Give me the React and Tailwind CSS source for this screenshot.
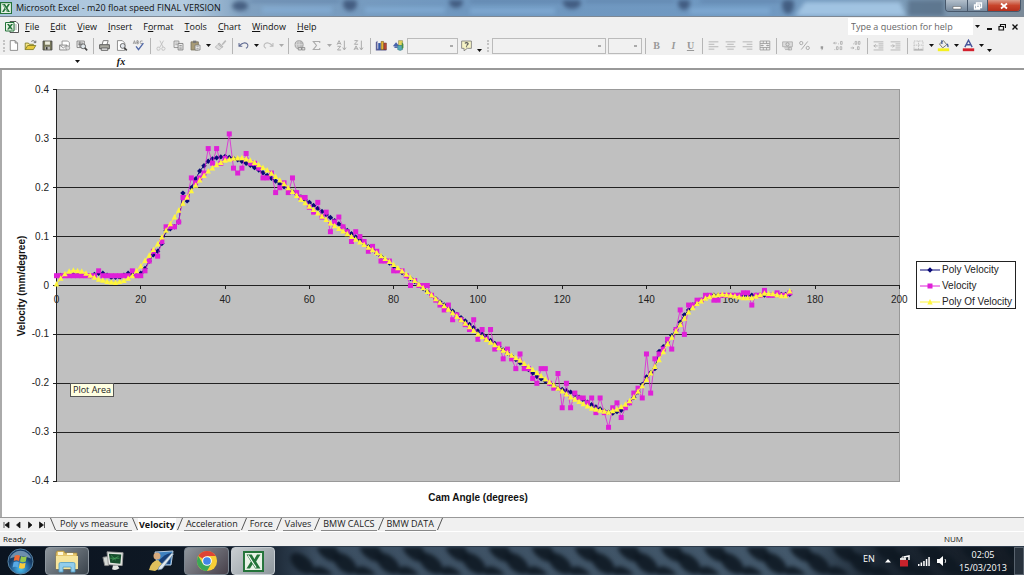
import React from "react";

/* ---------- chart data ---------- */

const velocity = [
  0.02, 0.02, 0.02, 0.02, 0.02, 0.02, 0.02, 0.02, 0.02, 0.02, 0.03, 0.02, 0.02, 0.02, 0.02, 0.02, 0.02, 0.02, 0.03, 0.02,
  0.02, 0.03, 0.05, 0.07, 0.06, 0.09, 0.12, 0.12, 0.12, 0.13, 0.18, 0.18, 0.22, 0.21, 0.22, 0.23, 0.28, 0.25, 0.28, 0.25,
  0.26, 0.31, 0.24, 0.23, 0.24, 0.27, 0.25, 0.25, 0.24, 0.22, 0.22, 0.23, 0.19, 0.2, 0.21, 0.19, 0.22, 0.19, 0.18, 0.18,
  0.16, 0.15, 0.17, 0.14, 0.15, 0.11, 0.13, 0.14, 0.12, 0.11, 0.09, 0.11, 0.1, 0.09, 0.07, 0.08, 0.07, 0.05, 0.05, 0.05,
  0.03, 0.03, 0.03, 0.02, 0, 0.01, 0, 0, 0, -0.02, -0.03, -0.04, -0.05, -0.04, -0.07, -0.06, -0.07, -0.08, -0.09, -0.07,
  -0.11, -0.09, -0.11, -0.09, -0.13, -0.12, -0.15, -0.13, -0.15, -0.17, -0.14, -0.17, -0.17, -0.19, -0.2, -0.17, -0.17, -0.2, -0.21, -0.18,
  -0.25, -0.2, -0.25, -0.22, -0.23, -0.23, -0.24, -0.23, -0.26, -0.23, -0.26, -0.29, -0.25, -0.24, -0.27, -0.25, -0.24, -0.22, -0.21, -0.23,
  -0.14, -0.22, -0.15, -0.14, -0.13, -0.11, -0.13, -0.09, -0.05, -0.1, -0.04, -0.04, -0.03, -0.03, -0.02, -0.02, -0.03, -0.03, -0.02, -0.02,
  -0.02, -0.02, -0.02, -0.015, -0.015, -0.04, -0.02, -0.02, -0.01, -0.02, -0.02, -0.015, -0.02, -0.02, -0.015,
];

const polyOfVelocityKnots = [
  [0, 0.003], [1, 0.015], [2, 0.024], [3, 0.029], [4, 0.031], [6, 0.029], [8, 0.021], [10, 0.013], [12, 0.008], [14, 0.006],
  [16, 0.01], [18, 0.02], [20, 0.04], [22, 0.062], [24, 0.085], [26, 0.113], [28, 0.14], [30, 0.168], [32, 0.194], [34, 0.216],
  [36, 0.234], [38, 0.247], [40, 0.256], [42, 0.26], [44, 0.261], [46, 0.256], [48, 0.247], [50, 0.236], [52, 0.223], [54, 0.208],
  [56, 0.192], [58, 0.176], [60, 0.162], [65, 0.128], [70, 0.1], [75, 0.073], [80, 0.043], [85, 0.01], [90, -0.027], [95, -0.063],
  [100, -0.099], [105, -0.127], [110, -0.153], [113, -0.172], [119, -0.21], [122, -0.228], [127, -0.251], [131, -0.259],
  [133, -0.253], [135, -0.243], [137, -0.228], [139, -0.205], [141, -0.179], [143, -0.152], [145, -0.119], [147, -0.093],
  [149, -0.067], [150, -0.054], [152, -0.037], [154, -0.026], [156, -0.02], [158, -0.018], [160, -0.02], [163, -0.025],
  [165, -0.025], [168, -0.016], [170, -0.017], [172, -0.021], [173, -0.021], [174, -0.011],
];

const polyVelocityKnots = [
  [0, 0.02], [4, 0.022], [8, 0.02], [10, 0.025], [11, 0.025], [13, 0.017], [15, 0.017], [17, 0.025], [19, 0.021], [20, 0.025],
  [21, 0.035], [22, 0.05], [23, 0.063], [24, 0.07], [25, 0.086], [26, 0.112], [28, 0.12], [29, 0.13], [30, 0.189], [31, 0.173],
  [32, 0.2], [33, 0.218], [34, 0.234], [35, 0.245], [36, 0.254], [37, 0.259], [39, 0.263], [40, 0.264], [42, 0.26], [44, 0.254],
  [46, 0.246], [48, 0.236], [50, 0.225], [54, 0.202], [56, 0.192], [60, 0.17], [65, 0.139], [70, 0.106], [75, 0.073], [80, 0.039],
  [85, 0.008], [90, -0.027], [95, -0.059], [100, -0.093], [105, -0.125], [110, -0.158], [114, -0.186], [119, -0.21], [122, -0.218],
  [127, -0.244], [130, -0.257], [132, -0.261], [134, -0.255], [136, -0.24], [138, -0.218], [140, -0.187], [142, -0.17],
  [143, -0.135], [145, -0.115], [147, -0.09], [149, -0.06], [151, -0.04], [154, -0.025], [156, -0.02], [165, -0.02], [174, -0.018],
];

function interpolate(knots) {
  const values = [];
  for (let i = 0; i < knots.length - 1; i++) {
    const [x0, y0] = knots[i];
    const [x1, y1] = knots[i + 1];
    for (let x = x0; x < x1; x++) values.push(y0 + ((y1 - y0) * (x - x0)) / (x1 - x0));
  }
  values.push(knots[knots.length - 1][1]);
  return values;
}

const polyVelocity = interpolate(polyVelocityKnots);
const polyOfVelocity = interpolate(polyOfVelocityKnots);

const px = (deg) => 56.5 + deg * 4.214;
const py = (v) => 215.5 - v * 489;
const line = (values) => values.map((v, i) => `${px(i).toFixed(1)},${py(v).toFixed(1)}`).join(" ");

const Diamond = ({ x, y }) => <path d={`M${x} ${y - 2.7}l2.700 2.700l-2.700 2.700l-2.700-2.700z`} fill="#0a0a78" />;
const Square = ({ x, y }) => <rect x={x - 2.5} y={y - 2.5} width="5" height="5" fill="#df20d8" />;
const Triangle = ({ x, y }) => <path d={`M${x} ${y - 3}l2.700 5.500h-5.400z`} fill="#fff63c" />;

function VelocityChart() {
  const levels = [0.4, 0.3, 0.2, 0.1, 0, -0.1, -0.2, -0.3, -0.4];
  const degrees = [0, 20, 40, 60, 80, 100, 120, 140, 160, 180, 200];
  const series = [
    ["Poly Velocity", "#0a0a78", Diamond, 200],
    ["Velocity", "#df20d8", Square, 216],
    ["Poly Of Velocity", "#fff63c", Triangle, 232],
  ];
  return (
    <svg viewBox="0 0 1024 447" className="block h-full w-full font-['Liberation_Sans',sans-serif] text-[10px]" role="img" aria-label="Velocity by cam angle">
      <rect x="56.5" y="19.5" width="843" height="392" fill="#c0c0c0" stroke="#999" />
      {levels.slice(1, -1).map((v) => (
        <path key={v} d={`M56 ${Math.round(py(v) - 0.5) + 0.5}H899`} stroke="#222" />
      ))}
      <path d="M56.5 19V412" stroke="#222" />
      {levels.map((v) => (
        <g key={v}>
          <path d={`M53 ${Math.round(py(v) - 0.5) + 0.5}H57`} stroke="#222" />
          <text x="49" y={Math.round(py(v)) + 3} textAnchor="end" fill="#222">{v}</text>
        </g>
      ))}
      {degrees.map((d) => (
        <g key={d}>
          <path d={`M${Math.round(px(d) - 0.5) + 0.5} 215V219`} stroke="#222" />
          <text x={px(d)} y="233" textAnchor="middle" fill="#222">{d}</text>
        </g>
      ))}
      <polyline points={line(polyVelocity)} fill="none" stroke="#0a0a78" />
      {polyVelocity.map((v, i) => <Diamond key={i} x={px(i)} y={py(v)} />)}
      <polyline points={line(velocity)} fill="none" stroke="#df20d8" strokeWidth="0.8" />
      {velocity.map((v, i) => <Square key={i} x={px(i)} y={py(v)} />)}
      <polyline points={line(polyOfVelocity)} fill="none" stroke="#fff63c" />
      {polyOfVelocity.map((v, i) => <Triangle key={i} x={px(i)} y={py(v)} />)}
      <text x="478" y="431" textAnchor="middle" fontWeight="bold" fill="#111">Cam Angle (degrees)</text>
      <text transform="translate(25 216) rotate(-90)" textAnchor="middle" fontWeight="bold" fill="#111">Velocity (mm/degree)</text>
      <rect x="916.5" y="191.5" width="99" height="47" fill="#fff" stroke="#222" />
      {series.map(([name, color, Marker, y]) => (
        <g key={name}>
          <path d={`M920 ${y}H940`} stroke={color} />
          <Marker x={930} y={y} />
          <text x="942" y={y + 3} fill="#222">{name}</text>
        </g>
      ))}
    </svg>
  );
}

/* ---------- small parts ---------- */

const icons = {
  new: <path d="M4 2h6l3 3v9H4zM10 2v3h3" fill="#fff" stroke="#777" />,
  open: <g><path d="M1.500 13V5h4l1 1.500h5V8" fill="#f7e58a" stroke="#77751f" /><path d="M1.500 13l3-5h10l-3 5z" fill="#e8c93c" stroke="#77751f" /><path d="M9 3c2-1.500 4-1 5 1M14.500 2v2.500H12" fill="none" stroke="#555" /></g>,
  save: <g><path d="M2.500 2.500h11v11h-11z" fill="#77775a" stroke="#444" /><path d="M5 3h6v4H5z" fill="#ececdf" /><path d="M5 9.500h6V13H5z" fill="#bbb" /><path d="M6 10h2v3H6z" fill="#333" /></g>,
  permission: <g><path d="M5 2.500h7l2 2V9H5z" fill="#fff" stroke="#888" /><path d="M2 7.500h9v6H2z" fill="#f4f4f4" stroke="#777" /><path d="M2 7.500l4.500 3.500L11 7.500" fill="none" stroke="#888" /><circle cx="12" cy="11" r="2.500" fill="#ddd" stroke="#999" /></g>,
  search: <g><path d="M2.500 2.500h9v8h-9z" fill="#eee" stroke="#777" /><path d="M4 5h6M4 7h6M6 3v7" stroke="#666" /><circle cx="10" cy="9" r="3" fill="#dfe6ea" stroke="#555" /><path d="M12 11l3 3" stroke="#444" strokeWidth="2" /></g>,
  print: <g><path d="M5 7l1.500-5h6L11 7" fill="#fff" stroke="#666" /><path d="M2 7h12v5H2z" fill="#a8a8a0" stroke="#444" /><path d="M4 11h8v3H4z" fill="#ddd" stroke="#555" /></g>,
  preview: <g><path d="M3 2h6l3 3v9H3z" fill="#fff" stroke="#777" /><circle cx="9.500" cy="8.500" r="3" fill="#e3e7ec" stroke="#555" /><path d="M11.500 11l3 3" stroke="#444" strokeWidth="2" /></g>,
  spell: <g><path d="M1.500 6l1.500-4l1.500 4M2 5h2M6 2v4h1.500q1.500-1 0-2H6h1.500q1-1.500 0-2zM13 2.500q-3-1-3 1.500t3 1.500" fill="none" stroke="#888" strokeWidth=".9" /><path d="M5 9l3 4l6-8" fill="none" stroke="#5068a8" strokeWidth="1.700" /></g>,
  cut: <path d="M6 2l4 8M10.500 2L6 10M5 10a2 2 0 100 3.800a2 2 0 000-3.800M11 10a2 2 0 100 3.800a2 2 0 000-3.800" fill="none" stroke="#bbb" />,
  copy: <g><path d="M2.500 2.500h6v8h-6z" fill="#eee" stroke="#888" /><path d="M4 5h3M4 7h3" stroke="#999" /><path d="M7.500 5.500h6v8h-6z" fill="#eee" stroke="#777" /><path d="M9 8h3M9 10h3M9 12h3" stroke="#888" /></g>,
  paste: <g><path d="M2.500 3.500h9v10h-9z" fill="#a89b76" stroke="#77705b" /><path d="M5 2h4v3H5z" fill="#777" /><path d="M7.500 7.500h6v6h-6z" fill="#fff" stroke="#777" /><path d="M9 9.500h3M9 11.500h3" stroke="#888" /></g>,
  painter: <g><path d="M14.500 2L10 7" stroke="#bbb" strokeWidth="2" /><path d="M6.500 5l4.500 4.500l-1.500 1l-4.500-4.500z" fill="#ccc" stroke="#aaa" /><path d="M5 6.500L1.500 10l5 3.500l3-3z" fill="#ddd" stroke="#b5b5b5" /></g>,
  undo: <path d="M2.500 5v4h4M3 8.500c3-4 8-5 10-2c1 2 0 4-2 5" fill="none" stroke="#5d6890" strokeWidth="1.300" />,
  redo: <path d="M13.500 5v4h-4M13 8.500c-3-4-8-5-10-2c-1 2 0 4 2 5" fill="none" stroke="#bbb" strokeWidth="1.300" />,
  link: <g><circle cx="7.500" cy="7" r="5" fill="#bbb" stroke="#999" /><path d="M3 7h9M7.500 2v10M5 3q-2 4 0 8" fill="none" stroke="#ddd" /><path d="M6.500 10.500h4v3h-4zM11 10.500h3.500v3H11z" fill="#ddd" stroke="#888" /></g>,
  sum: <path d="M12 5V3H4l4 5l-4 5h8v-2" fill="none" stroke="#aaa" strokeWidth="1.300" />,
  az: <path d="M2.500 7L5 2l2.500 5M3.500 5.500h3M3 9h4l-4 4.500h4.500M11.500 2v11M9.500 10.500l2 3l2-3" fill="none" stroke="#aaa" strokeWidth="1.200" />,
  za: <path d="M3 2h4L3 6.500h4.500M2.500 13.500L5 8.500l2.500 5M3.500 12h3M11.500 2v11M9.500 10.500l2 3l2-3" fill="none" stroke="#aaa" strokeWidth="1.200" />,
  chart: <g><path d="M1 4l2-2v10h11v2H1z" fill="#5b5f96" /><path d="M4 5h3v8H4z" fill="#3456a7" /><path d="M7.500 3h3v10h-3z" fill="#e6b32e" stroke="#77531a" strokeWidth=".7" /><path d="M11 5h3v8h-3z" fill="#c24835" stroke="#6e3024" strokeWidth=".7" /></g>,
  drawing: <g><path d="M8 2h5v6H8z" fill="#e5d65c" stroke="#8b8551" strokeWidth=".7" /><path d="M1 9l4-5l4 5z" fill="#4962aa" /><path d="M3 9h4v2H3z" fill="#4962aa" /><path d="M7 8h6v5q-3 2-6 0z" fill="#55a9b5" stroke="#347783" strokeWidth=".7" /><path d="M12 4l2 2v5l-2 1z" fill="#478d43" /></g>,
  help: <g><path d="M2 2.500h12v9H9l-4 3v-3H2z" fill="#f6f4c6" stroke="#777" /><path d="M6 5.500q2-2 4 0q0 1.500-2 2.500M8 9v1.200" fill="none" stroke="#555" strokeWidth="1.400" /></g>,
  left: <path d="M2 3.500h12M2 6.500h7M2 9.500h12M2 12.500h7" stroke="#aaa" />,
  center: <path d="M2 3.500h12M4 6.500h8M2 9.500h12M4 12.500h8" stroke="#aaa" />,
  right: <path d="M2 3.500h12M7 6.500h7M2 9.500h12M7 12.500h7" stroke="#aaa" />,
  merge: <path d="M2.500 2.500h12v11h-12zM2.500 5.500h12M2.500 10.500h12M6.500 2.500v3M10.500 2.500v3M6.500 10.500v3M10.500 10.500v3M3 8h4M10 8h4M5 7v2M12 7v2" fill="none" stroke="#999" />,
  currency: <g><path d="M2 3.500h12v6H2z" fill="#ddd" stroke="#aaa" /><circle cx="8" cy="6.500" r="2" fill="none" stroke="#999" /><path d="M4 11h7M5 13h6M9 10.500h4v3H9z" stroke="#aaa" fill="#ddd" /></g>,
  percent: <path d="M4 3a2 2 0 100 4a2 2 0 000-4M12 3L4 13M12 9a2 2 0 100 4a2 2 0 000-4" fill="none" stroke="#aaa" strokeWidth="1.200" />,
  comma: <path d="M7 9h3v2q0 2-2.500 3q1-1 1-2H7z" fill="#999" />,
  increase: <path d="M2 5h4M3.500 3.500L2 5l1.500 1.500M7.500 6h1M10.500 3h2v3.500h-2zM3 13h1M5.500 9.500h2V13h-2zM10 9.500h2V13h-2z" fill="none" stroke="#aaa" />,
  decrease: <path d="M5 6h1M7.500 3h2v3.500h-2zM11.500 3h2v3.500h-2zM2 11h4M4.500 9.500L6 11l-1.500 1.500M8 13h1M10.500 9.500h2V13h-2z" fill="none" stroke="#aaa" />,
  outdent: <path d="M2 3.500h12M8 6h6M8 8.500h6M8 11h6M2 13.500h12M2 8.500h5M4.500 6.500l-2 2l2 2" fill="none" stroke="#aaa" />,
  indent: <path d="M2 3.500h12M8 6h6M8 8.500h6M8 11h6M2 13.500h12M2 8.500h5M4.500 6.500l2 2l-2 2" fill="none" stroke="#aaa" />,
  border: <g fill="none" stroke="#aaa"><path d="M2.500 2.500h11v10h-11zM8 3v9M3 7.500h10" strokeDasharray="1 1" /><path d="M2 13.500h12" stroke="#888" /></g>,
  fill: <g><path d="M3 6l5-4l4 5l-5 4z" fill="#eee" stroke="#665" /><path d="M6 6V1.500M12 6q2 1 1.500 4" fill="none" stroke="#3d5590" strokeWidth="1.500" /><path d="M1 11.500h14V15H1z" fill="#f5f020" /></g>,
  color: <g><path d="M3.500 10L8 1.500L12.500 10M5.500 7h5" fill="none" stroke="#46549a" strokeWidth="1.700" /><path d="M1 11.500h14V15H1z" fill="#d3202d" /></g>,
};

function Tool({ name, label }) {
  return (
    <button type="button" aria-label={label || name} className="flex h-5 w-[17px] shrink-0 items-center justify-center">
      <svg viewBox="0 0 16 16" className="size-[13px]">{icons[name]}</svg>
    </button>
  );
}

function Letter({ children, className = "" }) {
  return (
    <button type="button" className={`h-5 w-[17px] shrink-0 font-['Liberation_Serif',serif] text-[10px] leading-5 font-bold text-[#999] ${className}`}>
      {children}
    </button>
  );
}

const Sep = () => <span className="mr-0.5 ml-[3px] h-4 w-0 shrink-0 border-l border-[#b5b5b5]" />;

function Drop({ dim, low, label = "More" }) {
  return (
    <button type="button" aria-label={label} className={low ? "flex h-5 w-2 shrink-0 items-end justify-center pb-1" : "flex h-5 w-2 shrink-0 items-center justify-center"}>
      <svg viewBox="0 0 5 3" className="h-[3px] w-[5px]"><path d="M0 0h5L2.500 3z" fill={dim ? "#aaa" : "#111"} /></svg>
    </button>
  );
}

function Combo({ className, label }) {
  return (
    <select aria-label={label} disabled className={`h-4 shrink-0 appearance-none border border-[#bbb] bg-[#f1f1f1] bg-[linear-gradient(#aaa,#aaa)] bg-[length:3px_2px] bg-[position:right_4px_center] bg-no-repeat ${className}`}>
      <option></option>
    </select>
  );
}

const Grip = () => <span className="h-3 w-0 shrink-0 border-l-2 border-dotted border-[#c4c4c4]" />;

function ExcelIcon({ className }) {
  return (
    <svg viewBox="0 0 24 24" className={className} aria-hidden="true">
      <path d="M1 1h22v22H1z" fill="#e9f3e7" stroke="#24743a" strokeWidth="2.500" />
      <path d="M4 4h6l3 5l3-5h4l-5 8l5 8h-6l-3-5l-3 5H4l5-8z" fill="#24743a" />
      <path d="M6 5l9 14" stroke="#fff" strokeWidth="1.200" />
    </svg>
  );
}

function WorkbookIcon({ className }) {
  return (
    <svg viewBox="0 0 28 24" className={className} aria-hidden="true">
      <path d="M10 1h12l5 5v17H10z" fill="#fff" stroke="#444" strokeWidth="1.800" />
      <path d="M18 8h6M18 12h6M18 16h6" stroke="#888" strokeWidth="1.500" />
      <path d="M1 3h17v17H1z" fill="#e9f3e7" stroke="#24743a" strokeWidth="2" />
      <path d="M4 6h4l2 3l2-3h4l-4 5.500l4 5.500h-4l-2-3l-2 3H4l4-5.500z" fill="#24743a" />
    </svg>
  );
}

const menus = [
  ["", "F", "ile"], ["", "E", "dit"], ["", "V", "iew"], ["", "I", "nsert"], ["F", "o", "rmat"],
  ["", "T", "ools"], ["", "C", "hart"], ["", "W", "indow"], ["", "H", "elp"],
];

const tabs = ["Poly vs measure", "Velocity", "Acceleration", "Force", "Valves", "BMW CALCS", "BMW DATA"];

/* ---------- window sections ---------- */

function TitleBar() {
  return (
    <header className="relative flex h-[17px] items-start overflow-hidden border-b border-[#7d8894] bg-[linear-gradient(90deg,#a9c4dc_0%,#b4cce0_18%,#7fa0c0_24%,#6f97bf_45%,#7099c2_75%,#7b9ab6_89%,#7b8a98_100%)]">
      <svg viewBox="0 0 1024 16" preserveAspectRatio="none" className="absolute inset-0 h-full w-full blur-[2px]" aria-hidden="true">
        <path d="M250 0h90M470 0h95M585 0h90M700 0h80" stroke="#4c6a92" strokeWidth="4" opacity=".6" />
        <path d="M262 10h70M365 10h80M470 11h85M690 11h80" stroke="#88b2dc" strokeWidth="6" opacity=".6" />
        <path d="M795 16l10-14h95l6 14z" fill="#a5c8e6" opacity=".9" />
        <path d="M908 0h36v16h-36z" fill="#536a82" opacity=".7" />
        <g fill="#33496c" opacity=".75">
          <ellipse cx="240" cy="6" rx="8" ry="5" /><ellipse cx="350" cy="4" rx="7" ry="7" /><ellipse cx="456" cy="2" rx="7" ry="6" />
          <ellipse cx="572" cy="3" rx="9" ry="6" /><ellipse cx="684" cy="3" rx="6" ry="7" /><ellipse cx="788" cy="5" rx="6" ry="9" />
        </g>
      </svg>
      <div className="relative flex h-4 flex-1 items-center gap-1">
        <ExcelIcon className="size-3" />
        <h1 className="text-[9px] leading-4 text-[#111]">Microsoft Excel - m20 float speed FINAL VERSION</h1>
      </div>
      <div className="relative mr-[3px] flex h-3 overflow-hidden rounded-b border border-t-0 border-[#48586b] text-white">
        <button type="button" aria-label="Minimise" className="flex w-[22px] items-center justify-center border-r border-[#48586b] bg-[linear-gradient(#b3bfcb,#75889c)]">
          <svg viewBox="0 0 10 8" className="h-2 w-2.5"><path d="M1 4.500h8v2.500H1z" fill="#fff" stroke="#555" strokeWidth=".5" /></svg>
        </button>
        <button type="button" aria-label="Restore" className="flex w-5 items-center justify-center border-r border-[#48586b] bg-[linear-gradient(#b3bfcb,#75889c)]">
          <svg viewBox="0 0 10 8" className="h-2 w-2.5"><path d="M3.500 1h5v4.500h-5zM1.500 3h5v4h-5z" fill="none" stroke="#fff" strokeWidth="1.300" /></svg>
        </button>
        <button type="button" aria-label="Close" className="flex w-8 items-center justify-center bg-[linear-gradient(#dc9a88,#c8452c_50%,#b52f1c)]">
          <svg viewBox="0 0 10 8" className="h-2 w-2.5"><path d="M2 1.500l6 5M8 1.500l-6 5" stroke="#fff" strokeWidth="1.800" /></svg>
        </button>
      </div>
    </header>
  );
}

function MenuBar() {
  return (
    <div className="flex h-[19px] items-center pl-[5px] text-[9px]">
      <WorkbookIcon className="h-3 w-3.5" />
      <nav className="ml-1.5 flex flex-1 gap-[11px]">
        {menus.map(([a, key, b]) => (
          <button type="button" key={key + b} className="leading-4 text-[#111]">
            {a}<u>{key}</u>{b}
          </button>
        ))}
      </nav>
      <input aria-label="Type a question for help" placeholder="Type a question for help" className="h-[17px] w-[125px] bg-white px-[3px] text-[9px] placeholder:text-[#666]" />
      <div className="flex items-center gap-[3px] pr-1">
        <Drop label="Recent questions" />
        <button type="button" aria-label="Minimise workbook" className="flex h-4 w-2.5 items-center justify-center"><svg viewBox="0 0 8 8" className="size-2"><path d="M2 6h5" stroke="#111" strokeWidth="2" /></svg></button>
        <button type="button" aria-label="Restore workbook" className="flex h-4 w-2.5 items-center justify-center"><svg viewBox="0 0 8 8" className="size-2"><path d="M2.500 1.500h5v3.500M1 3.500h4.500v3.500H1zM2.500 3V1M1 3.500h5M2.500 1.500h5" fill="none" stroke="#111" strokeWidth="1.200" /></svg></button>
        <button type="button" aria-label="Close workbook" className="flex h-4 w-2.5 items-center justify-center"><svg viewBox="0 0 8 8" className="size-2"><path d="M1.500 1.500l5 5M6.500 1.500l-5 5" stroke="#111" strokeWidth="1.400" /></svg></button>
      </div>
    </div>
  );
}

function Toolbar() {
  return (
    <div className="flex h-[19px] items-center overflow-hidden pl-[3px]" role="toolbar" aria-label="Standard and formatting">
      <Grip />
      <Tool name="new" /><Tool name="open" /><Tool name="save" /><Tool name="permission" /><Tool name="search" />
      <Sep />
      <Tool name="print" /><Tool name="preview" /><Tool name="spell" />
      <Sep />
      <Tool name="cut" /><Tool name="copy" /><Tool name="paste" /><Drop /><Tool name="painter" />
      <Sep />
      <Tool name="undo" /><Drop /><Tool name="redo" /><Drop dim />
      <Sep />
      <Tool name="link" /><Tool name="sum" /><Drop dim /><Tool name="az" /><Tool name="za" />
      <Sep />
      <Tool name="chart" /><Tool name="drawing" />
      <Combo label="Zoom" className="w-[51px]" />
      <Tool name="help" />
      <Drop low label="Toolbar options" />
      <span className="w-1 shrink-0" /><Grip />
      <span className="w-[3px] shrink-0" />
      <Combo label="Font" className="w-[114px]" />
      <span className="w-0.5 shrink-0" />
      <Combo label="Font size" className="w-[34px]" />
      <Sep />
      <Letter>B</Letter><Letter className="italic">I</Letter><Letter className="underline">U</Letter>
      <Sep />
      <Tool name="left" /><Tool name="center" /><Tool name="right" /><Tool name="merge" />
      <Sep />
      <Tool name="currency" /><Tool name="percent" /><Tool name="comma" /><Tool name="increase" /><Tool name="decrease" />
      <Sep />
      <Tool name="outdent" /><Tool name="indent" />
      <Sep />
      <Tool name="border" /><Drop /><Tool name="fill" /><Drop /><Tool name="color" /><Drop />
      <Drop low label="Toolbar options" />
    </div>
  );
}

function FormulaBar() {
  return (
    <div className="flex h-[15px] items-center border-b-2 border-[#999] bg-white">
      <input aria-label="Name box" className="h-3 w-[73px] bg-white px-1 text-[9px]" />
      <Drop label="Name list" />
      <button type="button" className="ml-8 w-4 text-center font-['Liberation_Serif',serif] text-[10px] leading-3 font-bold text-[#111] italic">fx</button>
      <input aria-label="Formula" className="h-3 min-w-0 flex-1 bg-white px-1 text-[9px]" />
    </div>
  );
}

function SheetTabs() {
  return (
    <div className="flex h-3.5 items-stretch border-t border-[#999] bg-[#f0f0f0] pl-0.5 text-[9px]">
      <div className="flex items-center">
        {[
          ["First sheet", "M2 1v6M7 1v6L3 4z"],
          ["Previous sheet", "M6 1v6L2.500 4z"],
          ["Next sheet", "M2.500 1v6L6 4z"],
          ["Last sheet", "M6.500 1v6M1.500 1v6L5.500 4z"],
        ].map(([label, d]) => (
          <button type="button" key={label} aria-label={label} className="flex w-3 justify-start">
            <svg viewBox="0 0 8 8" className="size-2"><path d={d} fill="#111" stroke="#111" strokeWidth=".7" /></svg>
          </button>
        ))}
      </div>
      {tabs.map((name, i) => (
        <React.Fragment key={name}>
          <svg viewBox="0 0 6 12" className={i < 2 ? "h-3 w-1.5" : "h-3 w-2"} aria-hidden="true">
            <path d={i < 2 ? "M.5 0L5.500 12" : "M5.500 0L.5 12"} stroke="#555" />
          </svg>
          <button
            type="button"
            className={
              name === "Velocity"
                ? "bg-white px-px leading-3 font-bold text-[#111]"
                : i === 0
                  ? "border-b border-[#888] px-1 leading-3 text-[#222]"
                  : "border-b border-[#888] px-0.5 leading-3 text-[#222]"
            }
          >
            {name}
          </button>
        </React.Fragment>
      ))}
      <svg viewBox="0 0 6 12" className="h-3 w-2" aria-hidden="true"><path d="M5.500 0L.5 12" stroke="#555" /></svg>
    </div>
  );
}

const blobs = [];
for (let i = 0; i < 18; i++) {
  blobs.push([302 + i * 43, 17]);
  blobs.push([328 + i * 43, 4]);
  blobs.push([324 + i * 43, 31]);
}

function Taskbar() {
  return (
    <footer className="relative flex h-[29px] items-center overflow-hidden border-t border-[#2d3b4b] bg-[linear-gradient(90deg,#0b1420_0%,#101a26_25%,#3c4f62_31%,#43586b_78%,#1b2632_86%,#141b24_100%)] text-[9px] text-white">
      <svg viewBox="0 0 1024 29" preserveAspectRatio="none" className="absolute inset-0 h-full w-full blur-[2px]" aria-hidden="true">
        {blobs.map(([x, y]) => (
          <ellipse key={x + "-" + y} cx={x} cy={y} rx="14" ry="8" fill="#0e1822" opacity=".9" transform={`rotate(42 ${x} ${y})`} />
        ))}
      </svg>
      <div className="relative flex h-full flex-1 items-stretch">
        <button type="button" aria-label="Start" className="flex w-[45px] items-center pl-[7px]">
          <svg viewBox="0 0 28 28" className="size-[27px]">
            <defs><radialGradient id="orb" cx=".5" cy=".8"><stop offset="0" stopColor="#4cc2ee" /><stop offset=".6" stopColor="#2a6fa8" /><stop offset="1" stopColor="#173d66" /></radialGradient></defs>
            <circle cx="14" cy="14" r="13" fill="url(#orb)" stroke="#5b87a8" />
            <path d="M3 11a11.500 11.500 0 0122 0q-11-5-22 0z" fill="#b4d3e8" opacity=".55" />
            <path d="M8 8q3-1.500 5.500 0l-1 5.500q-3-1.500-5.500 0z" fill="#ef6a35" />
            <path d="M14.500 8.500q3 1.500 6 0l-1 5.500q-3 1.500-6 0z" fill="#96c94b" />
            <path d="M6.800 14.800q3-1.500 5.500 0l-1 5.500q-3-1.500-5.500 0z" fill="#58a9e6" />
            <path d="M13.300 15.300q3 1.500 6 0l-1 5.500q-3 1.500-6 0z" fill="#fccb3b" />
          </svg>
        </button>
        <button type="button" aria-label="Windows Explorer" className="flex w-[44px] items-center justify-center rounded-sm border border-[#8d969e] bg-[linear-gradient(135deg,#8d959c,#3a434c)]">
          <svg viewBox="0 0 26 24" className="h-6 w-[26px]">
            <path d="M2 4l1-2h7l1 2h12v16H2z" fill="#e4c56c" stroke="#a58536" strokeWidth=".7" />
            <path d="M2 7h22v13H2z" fill="#f6e49b" />
            <path d="M4 3h5v3H4zM13 4h6v2h-6z" fill="#fff8d8" />
            <path d="M5 23v-8q0-1.500 1.500-1.500h13Q21 13.500 21 15v8h-4v-5H9v5z" fill="#92cdec" stroke="#4e9bc4" strokeWidth=".8" />
          </svg>
        </button>
        <button type="button" aria-label="Computer monitor" className="flex w-12 items-center justify-center">
          <svg viewBox="0 0 24 24" className="size-[22px]">
            <path d="M1 8l6-1v10H3z" fill="#d5d9d5" stroke="#888" /><path d="M5.500 2l17.500 1l-1 14l-15-1z" fill="#e5e8e4" stroke="#999" />
            <path d="M7.500 4l13.500 1l-1 10l-11-1z" fill="#174f2e" /><path d="M10 6l5 5M11 11l7-4M9 9h10" stroke="#48a35d" strokeWidth=".8" />
            <path d="M12 17h5l2 3q-4 3-8 1z" fill="#e3e6e3" />
          </svg>
        </button>
        <button type="button" aria-label="Device tool" className="flex w-[47px] items-center justify-center">
          <svg viewBox="0 0 26 24" className="h-6 w-[26px]">
            <path d="M7 3l18-1l-2 14H9z" fill="#3f81bf" stroke="#b7cbe0" /><path d="M9 14q8-10 14-10l-1 11z" fill="#173f78" />
            <circle cx="9" cy="7" r="3.500" fill="#d6a97c" /><path d="M1 21q2-9 9-10l5 5q-4 4-8 6z" fill="#e0c05c" /><path d="M11 18L24 4l1.500 1L14 20l-4 1z" fill="#dfe8ef" stroke="#6e8ca8" strokeWidth=".7" />
          </svg>
        </button>
        <button type="button" aria-label="Google Chrome" className="flex w-[45px] items-center justify-center rounded-sm border border-[#7c8690] bg-[linear-gradient(135deg,#8f969d,#47404a)]">
          <svg viewBox="0 0 24 24" className="size-[22px]">
            <circle cx="12" cy="12" r="11" fill="#f9cf36" />
            <path d="M12 12L2.500 6.500A11 11 0 0121.500 6.500H12z" fill="#dd4436" />
            <path d="M2.500 6.500A11 11 0 0012 23l4.700-8.300L12 12l-4.700 2.700z" fill="#3aa757" />
            <circle cx="12" cy="12" r="5.300" fill="#fff" /><circle cx="12" cy="12" r="4.200" fill="#4285e8" />
          </svg>
        </button>
        <span className="w-0.5" />
        <button type="button" aria-label="Microsoft Excel" className="flex w-[44px] items-center justify-center rounded-sm border border-[#c5cbd0] bg-[linear-gradient(135deg,#c9ced2,#8e979d)]">
          <ExcelIcon className="size-[21px]" />
        </button>
      </div>
      <div className="relative flex h-full items-center">
        <span className="w-[22px] pb-1">EN</span>
        <button type="button" aria-label="Show hidden icons" className="flex w-3.5"><svg viewBox="0 0 6 4" className="h-1 w-1.5"><path d="M0 3.500L3 0l3 3.500z" fill="#fff" /></svg></button>
        <svg viewBox="0 0 12 12" className="mr-[7px] size-3" aria-label="Security alert"><path d="M1 3h6v8H1z" fill="#ddd" /><path d="M5 2l5-1v4" fill="none" stroke="#fff" strokeWidth="1.500" /><path d="M1 5h8v6.500H1z" fill="#c8232c" /><path d="M3 4V2h3v2" fill="none" stroke="#eee" /></svg>
        <svg viewBox="0 0 12 12" className="mr-[7px] size-3" aria-label="Signal strength"><path d="M0 9h1.500v2H0zM2.600 7.500h1.500V11H2.600zM5.200 6h1.500v5H5.200zM7.800 4h1.500v7H7.800zM10.300 2h1.500v9h-1.500z" fill="#fff" /></svg>
        <svg viewBox="0 0 12 12" className="mr-[7px] size-3" aria-label="Volume"><path d="M0 4h2.500L6 1v10L2.500 8H0z" fill="#fff" /><path d="M8 4q1.500 2 0 4" fill="none" stroke="#ddd" /></svg>
        <time className="w-[54px] text-center leading-[13px]">02:05<br />15/03/2013</time>
        <button type="button" aria-label="Show desktop" className="ml-1 h-full w-2.5 border border-[#59636e] bg-[#28323d]" />
      </div>
    </footer>
  );
}

export default function App() {
  return (
    <div className="flex h-screen flex-col overflow-hidden bg-[#f0f0f0] font-['Open_Sans','Noto_Sans',sans-serif] text-[#111]">
      <TitleBar />
      <MenuBar />
      <Toolbar />
      <FormulaBar />
      <main className="relative min-h-0 flex-1 border-l-2 border-[#aaa] bg-white">
        <div className="-ml-0.5 h-full">
          <VelocityChart />
        </div>
        <div role="tooltip" className="absolute top-[70%] left-[68px] border border-[#555] bg-[#ffffe1] px-0.5 text-[9px] leading-3 text-[#222]">Plot Area</div>
      </main>
      <SheetTabs />
      <div className="flex h-[15px] items-center justify-between border-t border-white pr-[61px] pl-[3px] text-[8px]">
        <span>Ready</span>
        <span>NUM</span>
      </div>
      <Taskbar />
    </div>
  );
}
